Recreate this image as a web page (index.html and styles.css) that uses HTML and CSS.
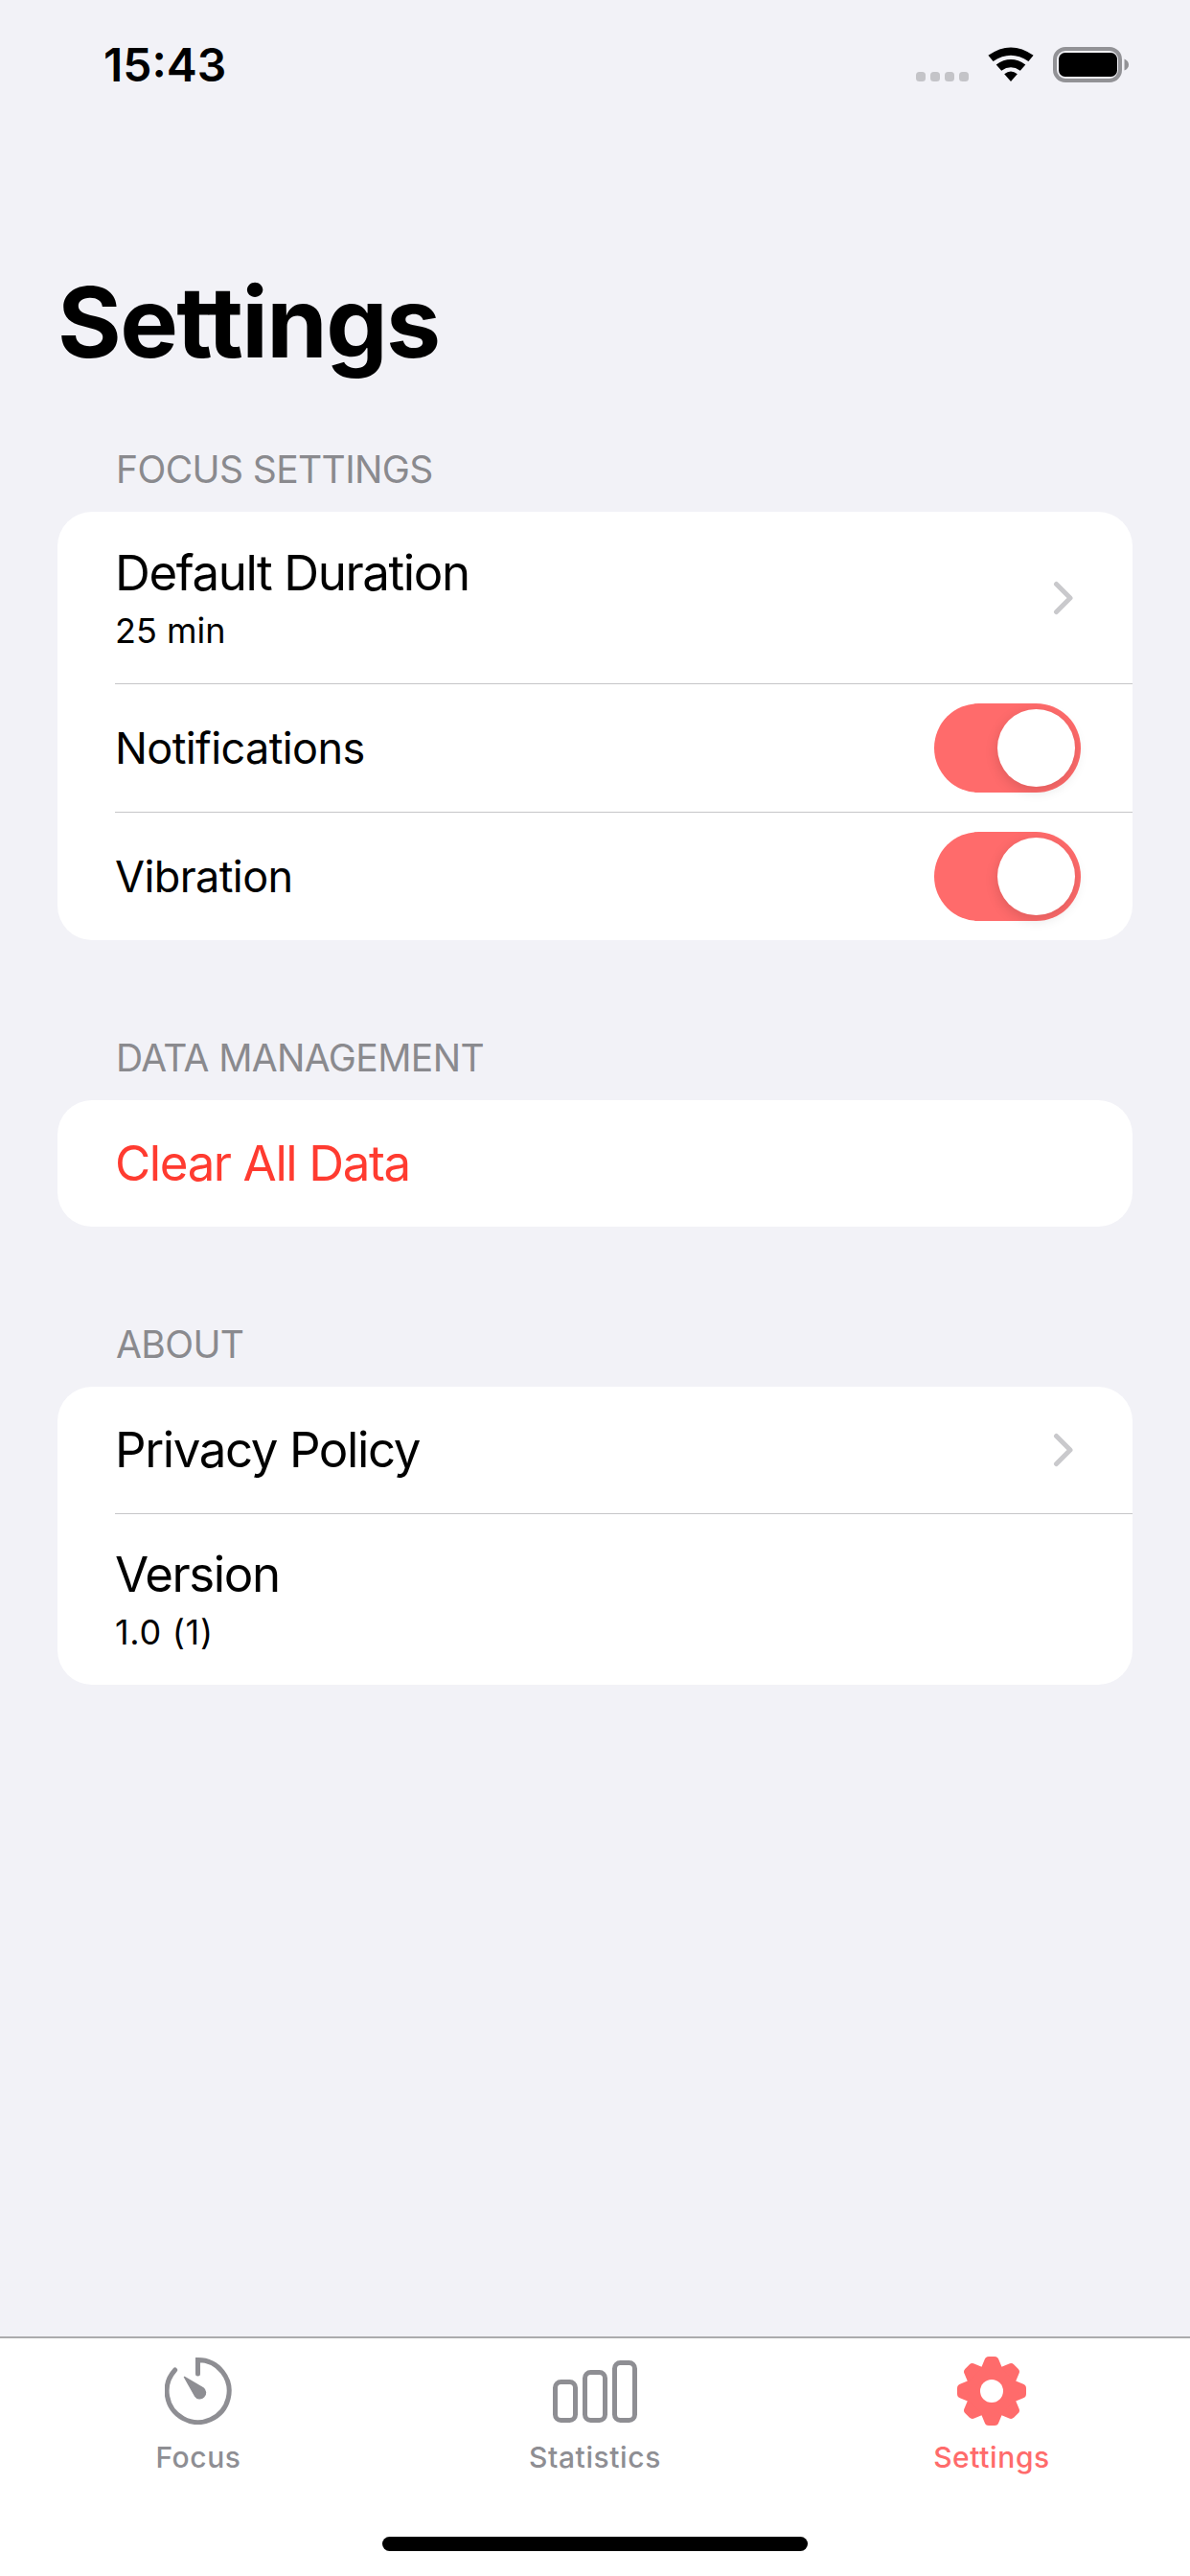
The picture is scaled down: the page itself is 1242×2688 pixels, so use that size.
FILE: index.html
```html
<!DOCTYPE html>
<html lang="en">
<head>
<meta charset="utf-8">
<title>Settings</title>
<link rel="stylesheet" href="styles.css">
</head>
<body>
<div class="screen">
  <header class="status">
    <span class="time">15:43</span>
    <div class="status-icons">
      <svg class="dots" width="55" height="10" viewBox="0 0 55 10"><rect x="0" width="10" height="10" rx="3.5"/><rect x="15" width="10" height="10" rx="3.5"/><rect x="30" width="10" height="10" rx="3.5"/><rect x="45" width="10" height="10" rx="3.5"/></svg>
      <svg width="48" height="36" viewBox="0 0 48 36"><path d="M.4 8.8Q24-8 47.6 8.8L42.4 14.9Q24 2.5 5.6 14.9Z"/><path d="M8.7 18.4Q24 7.5 39.3 18.4L33.8 24.7Q24 18 14.2 24.7Z"/><path d="M17.2 28.2Q24 23 30.8 28.2L24 36Z"/></svg>
      <svg width="79" height="37" viewBox="0 0 79 37"><rect class="batt-frame" x="2" y="2" width="68" height="33" rx="11"/><rect x="6" y="6" width="61" height="25" rx="6.5"/><path class="batt-tip" d="M74.5 12.5Q79 14.5 79 18.5T74.5 24.5Z"/></svg>
    </div>
  </header>

  <main class="content">
    <h1 class="title">Settings</h1>

    <section class="section">
      <h2 class="section-head">FOCUS SETTINGS</h2>
      <div class="card">
        <div class="row row-tall row-link">
          <div>
            <div class="row-title">Default Duration</div>
            <div class="row-sub">25 min</div>
          </div>
          <svg class="chevron" width="21" height="36" viewBox="0 0 21 36"><path d="M3.5 3.5L18 18L3.5 32.5"/></svg>
        </div>
        <div class="row row-toggle">
          <div class="row-title row-title-small">Notifications</div>
          <div class="toggle"><span class="thumb"></span></div>
        </div>
        <div class="row row-toggle">
          <div class="row-title row-title-small">Vibration</div>
          <div class="toggle"><span class="thumb"></span></div>
        </div>
      </div>
    </section>

    <section class="section">
      <h2 class="section-head">DATA MANAGEMENT</h2>
      <div class="card">
        <div class="row row-plain">
          <div class="row-title danger">Clear All Data</div>
        </div>
      </div>
    </section>

    <section class="section">
      <h2 class="section-head">ABOUT</h2>
      <div class="card">
        <div class="row row-plain row-link">
          <div class="row-title">Privacy Policy</div>
          <svg class="chevron" width="21" height="36" viewBox="0 0 21 36"><path d="M3.5 3.5L18 18L3.5 32.5"/></svg>
        </div>
        <div class="row row-tall">
          <div>
            <div class="row-title">Version</div>
            <div class="row-sub row-sub-wide">1.0 (1)</div>
          </div>
        </div>
      </div>
    </section>
  </main>

  <nav class="tabbar">
    <div class="tabs">
      <div class="tab">
        <div class="tab-icon">
          <svg class="icon-gray" width="70" height="70" viewBox="0 0 70 70"><path class="line" d="M34.5 17V2.5A32.5 32.5 0 1 1 10.7 13"/><path class="needle" d="M20.5 20.5L40 31.8A6 6 0 1 1 31.5 40Z"/></svg>
        </div>
        <span class="tab-label">Focus</span>
      </div>
      <div class="tab">
        <div class="tab-icon">
          <svg class="icon-gray" width="88" height="65" viewBox="0 0 88 65"><rect class="line" x="2.5" y="22.5" width="21" height="40" rx="6"/><rect class="line" x="33.5" y="12.5" width="21" height="50" rx="6"/><rect class="line" x="64.5" y="2.5" width="21" height="60" rx="6"/></svg>
        </div>
        <span class="tab-label">Statistics</span>
      </div>
      <div class="tab tab-active">
        <div class="tab-icon">
          <svg class="gear" width="72" height="72" viewBox="-36 -36 72 72">
            <circle r="27"/>
            <path id="tooth" d="M-11-24L-7.5-32.5Q-6.5-36-3-36H3Q6.5-36 7.5-32.5L11-24Z"/>
            <use href="#tooth" transform="rotate(45)"/>
            <use href="#tooth" transform="rotate(90)"/>
            <use href="#tooth" transform="rotate(135)"/>
            <use href="#tooth" transform="rotate(180)"/>
            <use href="#tooth" transform="rotate(225)"/>
            <use href="#tooth" transform="rotate(270)"/>
            <use href="#tooth" transform="rotate(315)"/>
            <circle class="gear-hole" r="12"/>
          </svg>
        </div>
        <span class="tab-label">Settings</span>
      </div>
    </div>
    <div class="home-indicator"></div>
  </nav>
</div>
</body>
</html>
```

FILE: styles.css
```css
* { box-sizing: border-box; }

html, body { margin: 0; padding: 0; }

body {
  font-family: Inter, "Liberation Sans", sans-serif;
  color: #000;
  background: #f2f2f7;
}

.screen {
  display: flex;
  flex-direction: column;
  width: 1242px;
  height: 2688px;
  overflow: hidden;
}

/* Status bar */
.status {
  display: flex;
  justify-content: space-between;
  align-items: flex-start;
  height: 132px;
  padding: 40px 64px 0 108px;
}

.time {
  font-size: 48px;
  font-weight: 600;
  line-height: 56px;
}

.status-icons {
  display: flex;
  align-items: flex-start;
  gap: 20px;
  margin-top: 9px;
}

.dots { margin-top: 26px; fill: #c4c4c8; }

.batt-frame { fill: none; stroke: #929296; stroke-width: 4; }
.batt-tip { fill: #929296; }

/* Content */
.content { flex: 1; padding: 0 60px; }

.title {
  margin: 144px 0 0;
  font-size: 102px;
  font-weight: 700;
  line-height: 120px;
  letter-spacing: -1.6px;
}

.section { margin-top: 100px; }
.title + .section { margin-top: 71px; }

.section-head {
  margin: 0 0 21px;
  padding-left: 61px;
  font-size: 39px;
  font-weight: 400;
  line-height: 46px;
  letter-spacing: -0.6px;
  color: #8a8a8e;
}

.card {
  background: #fff;
  border-radius: 36px;
  overflow: hidden;
}

.row {
  display: flex;
  justify-content: space-between;
  align-items: center;
  margin-left: 60px;
  padding-right: 54px;
  border-top: 1px solid #c6c6c8;
}

.row:first-child { border-top: 0; }

.row-link { padding-right: 62px; }
.row-tall { height: 179px; }
.row-plain { height: 132px; }
.row-toggle { height: 133px; }
.row-toggle:last-child { height: 134px; }
.row-tall + .row-toggle { height: 134px; }

.row-title {
  font-size: 51px;
  line-height: 60px;
  letter-spacing: -1.4px;
}

.row-title-small {
  font-size: 45px;
  letter-spacing: -0.6px;
}

.row-sub {
  margin-top: 8px;
  font-size: 36px;
  line-height: 44px;
}

.row-sub-wide { letter-spacing: 0.7px; }

.danger { color: #ff3b30; }

.chevron {
  fill: none;
  stroke: #c9c9cc;
  stroke-width: 5;
  stroke-linecap: round;
  stroke-linejoin: round;
}

.toggle {
  display: flex;
  justify-content: flex-end;
  width: 153px;
  height: 93px;
  padding: 6px;
  border-radius: 47px;
  background: #ff6b6b;
}

.thumb {
  width: 81px;
  height: 81px;
  border-radius: 50%;
  background: #fff;
  box-shadow: 0 4px 14px rgba(0, 0, 0, 0.14);
}

/* Tab bar */
.tabbar {
  display: flex;
  flex-direction: column;
  height: 250px;
  background: #fff;
  border-top: 2px solid #ababad;
}

.tabs {
  display: grid;
  grid-template-columns: repeat(3, 1fr);
}

.tab {
  display: flex;
  flex-direction: column;
  align-items: center;
  padding-top: 19px;
  color: #8e8e93;
}

.tab-active { color: #ff6b6b; }

.tab-icon {
  display: flex;
  justify-content: center;
  align-items: center;
  height: 72px;
}

.tab-label {
  margin-top: 15px;
  font-size: 30px;
  font-weight: 500;
  line-height: 36px;
  letter-spacing: 0.6px;
}

.line {
  fill: none;
  stroke: #8e8e93;
  stroke-width: 5;
  stroke-linecap: round;
}

.needle {
  fill: #8e8e93;
  stroke: #8e8e93;
  stroke-width: 1.5;
  stroke-linejoin: round;
}

.gear { fill: #ff6b6b; }
.gear-hole { fill: #fff; }

.home-indicator {
  align-self: center;
  width: 444px;
  height: 15px;
  margin-top: auto;
  margin-bottom: 26px;
  border-radius: 8px;
  background: #000;
}
```
